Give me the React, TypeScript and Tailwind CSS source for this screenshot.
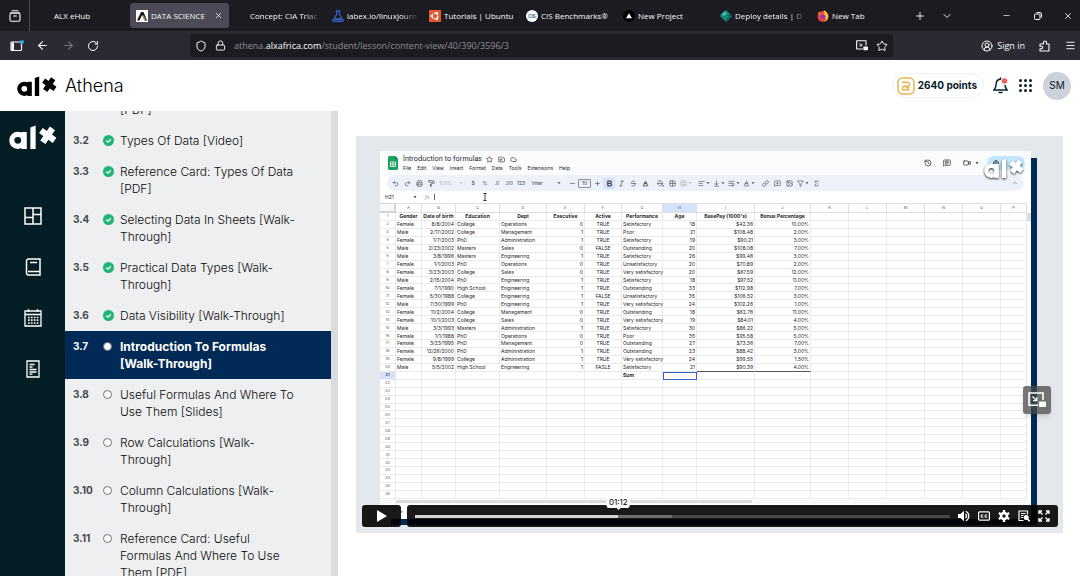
import React from 'react'
import {
  AlignLeft, ArrowDownToLine, ArrowLeft, ArrowRight, Baseline, Bold, ChevronDown, ChevronUp, CircleUserRound, Cloud,
  Filter, FolderInput, Globe, Grid2x2, History, Image as ImageIcon, Italic, Link as LinkIcon, Lock,
  Menu, MessageSquarePlus, MessageSquareText, Minus, PaintBucket, PaintRoller, Plus, Printer, Redo2, RotateCw,
  Shield, Sigma, Star, Strikethrough, TableCellsMerge, Undo2, Video, WrapText, X,
} from 'lucide-react'

const tabs = [
  { title: 'ALX eHub', icon: 'none' },
  { title: 'DATA SCIENCE', icon: 'alx', active: true },
  { title: 'Concept: CIA Triac', icon: 'none', fade: true },
  { title: 'labex.io/linuxjourn', icon: 'flask', fade: true },
  { title: 'Tutorials | Ubuntu', icon: 'ubuntu' },
  { title: 'CIS Benchmarks®', icon: 'cis' },
  { title: 'New Project', icon: 'vercel' },
  { title: 'Deploy details | D', icon: 'deploy', fade: true },
  { title: 'New Tab', icon: 'firefox' },
]

const lessons = [
  { no: '', title: '[PDF]', state: 'hidden' },
  { no: '3.2', title: 'Types Of Data [Video]', state: 'done' },
  { no: '3.3', title: 'Reference Card: Types Of Data [PDF]', state: 'done' },
  { no: '3.4', title: 'Selecting Data In Sheets [Walk-Through]', state: 'done' },
  { no: '3.5', title: 'Practical Data Types [Walk-Through]', state: 'done' },
  { no: '3.6', title: 'Data Visibility [Walk-Through]', state: 'done' },
  { no: '3.7', title: 'Introduction To Formulas [Walk-Through]', state: 'active' },
  { no: '3.8', title: 'Useful Formulas And Where To Use Them [Slides]', state: 'todo' },
  { no: '3.9', title: 'Row Calculations [Walk-Through]', state: 'todo' },
  { no: '3.10', title: 'Column Calculations [Walk-Through]', state: 'todo' },
  { no: '3.11', title: 'Reference Card: Useful Formulas And Where To Use Them [PDF]', state: 'todo' },
]

const columns = [
  { name: 'A', width: 26, head: 'Gender', align: 'text-left' },
  { name: 'B', width: 34, head: 'Date of birth', align: 'text-right' },
  { name: 'C', width: 44, head: 'Education', align: 'text-left' },
  { name: 'D', width: 47, head: 'Dept', align: 'text-left' },
  { name: 'E', width: 38, head: 'Executive', align: 'text-right' },
  { name: 'F', width: 37, head: 'Active', align: 'text-center' },
  { name: 'G', width: 41, head: 'Performance', align: 'text-left' },
  { name: 'H', width: 34, head: 'Age', align: 'text-right' },
  { name: 'I', width: 58, head: "BasePay (1000's)", align: 'text-right' },
  { name: 'J', width: 56, head: 'Bonus Percentage', align: 'text-right' },
  { name: 'K', width: 38, head: '', align: 'text-left' },
  { name: 'L', width: 38, head: '', align: 'text-left' },
  { name: 'M', width: 38, head: '', align: 'text-left' },
  { name: 'N', width: 38, head: '', align: 'text-left' },
  { name: 'O', width: 38, head: '', align: 'text-left' },
  { name: 'P', width: 26, head: '', align: 'text-left' },
]

const staff = [
  ['Female', '8/8/2004', 'College', 'Operations', '0', 'TRUE', 'Satisfactory', '18', '$42.36', '10.00%'],
  ['Male', '2/17/2002', 'College', 'Management', '1', 'TRUE', 'Poor', '21', '$108.48', '2.00%'],
  ['Female', '1/7/2003', 'PhD', 'Administration', '1', 'TRUE', 'Satisfactory', '19', '$90.21', '3.00%'],
  ['Male', '2/23/2002', 'Masters', 'Sales', '0', 'FALSE', 'Outstanding', '20', '$108.08', '7.00%'],
  ['Male', '3/8/1996', 'Masters', 'Engineering', '1', 'TRUE', 'Satisfactory', '26', '$99.46', '3.00%'],
  ['Female', '1/1/2003', 'PhD', 'Operations', '0', 'TRUE', 'Unsatisfactory', '20', '$70.89', '2.00%'],
  ['Female', '3/23/2003', 'College', 'Sales', '0', 'TRUE', 'Very satisfactory', '20', '$67.59', '12.00%'],
  ['Male', '2/15/2004', 'PhD', 'Engineering', '1', 'TRUE', 'Satisfactory', '18', '$97.52', '11.00%'],
  ['Female', '7/1/1990', 'High School', 'Engineering', '1', 'TRUE', 'Outstanding', '33', '$112.98', '7.00%'],
  ['Female', '5/30/1988', 'College', 'Engineering', '1', 'FALSE', 'Unsatisfactory', '35', '$106.52', '3.00%'],
  ['Male', '7/30/1999', 'PhD', 'Engineering', '1', 'TRUE', 'Very satisfactory', '24', '$102.26', '1.00%'],
  ['Female', '11/2/2004', 'College', 'Management', '0', 'TRUE', 'Outstanding', '18', '$62.76', '11.00%'],
  ['Female', '10/1/2003', 'College', 'Sales', '0', 'TRUE', 'Very satisfactory', '19', '$84.01', '4.00%'],
  ['Male', '3/3/1993', 'Masters', 'Administration', '1', 'TRUE', 'Satisfactory', '30', '$86.22', '5.00%'],
  ['Female', '1/1/1988', 'PhD', 'Operations', '0', 'TRUE', 'Poor', '35', '$95.58', '5.00%'],
  ['Female', '3/23/1995', 'PhD', 'Management', '0', 'TRUE', 'Outstanding', '27', '$73.36', '7.00%'],
  ['Female', '12/26/2000', 'PhD', 'Administration', '1', 'TRUE', 'Outstanding', '23', '$88.42', '3.00%'],
  ['Female', '9/8/1999', 'College', 'Administration', '1', 'TRUE', 'Very satisfactory', '24', '$99.55', '1.50%'],
  ['Male', '5/5/2002', 'High School', 'Engineering', '1', 'FASLE', 'Satisfactory', '21', '$90.39', '4.00%'],
  ['', '', '', '', '', '', 'Sum', '', '', ''],
]

function AlxLogo({ className }: { className: string }) {
  return (
    <svg viewBox="0 0 40 20" className={className} fill="none" stroke="currentColor" aria-label="alx" role="img">
      <circle cx="7.3" cy="12.8" r="5" strokeWidth="4.2" />
      <rect x="10.4" y="5.8" width="4.4" height="14.2" fill="currentColor" stroke="none" />
      <path d="M17.800 2 22.200.4V20h-4.400z" fill="currentColor" stroke="none" />
      <line x1="26.600" y1="4.600" x2="38" y2="12.800" strokeWidth="5.200" />
      <line x1="36.200" y1="2.800" x2="28.200" y2="14.400" strokeWidth="5.200" />
    </svg>
  )
}

function Favicon({ kind }: { kind: string }) {
  if (kind === 'alx') {
    return (
      <svg viewBox="0 0 12 12" className="size-3 shrink-0">
        <rect width="12" height="12" fill="#fff" />
        <path d="M1 10.500 5 2h2.500L11 10.500H8.500L6 5l-2.500 5.500z" fill="#16161d" />
        <path d="M7 5.500 9 10" stroke="#e8955a" strokeWidth="1.200" />
      </svg>
    )
  }
  if (kind === 'flask') {
    return (
      <svg viewBox="0 0 12 12" className="size-3 shrink-0" fill="none" stroke="#2f66d0" strokeWidth="1.2">
        <path d="M3.800.8h4.400M4.600.8v3.700L.9 10.200c-.3.600 0 1.100.6 1.100h9c.6 0 .9-.5.6-1.100L7.400 4.500V.8" />
        <path d="M2.800 8.200h6.400L10 10.200H2z" fill="#2f66d0" stroke="none" />
      </svg>
    )
  }
  if (kind === 'ubuntu') {
    return (
      <svg viewBox="0 0 12 12" className="size-3 shrink-0">
        <rect width="12" height="12" fill="#e2582c" />
        <circle cx="6" cy="6" r="2.900" fill="none" stroke="#fff" strokeWidth="1.200" strokeDasharray="5 1.070" />
        <circle cx="2.400" cy="6" r="1" fill="#fff" />
        <circle cx="7.900" cy="2.800" r="1" fill="#fff" />
        <circle cx="7.900" cy="9.200" r="1" fill="#fff" />
      </svg>
    )
  }
  if (kind === 'cis') {
    return (
      <svg viewBox="0 0 12 12" className="size-3 shrink-0">
        <circle cx="6" cy="6" r="6" fill="#fff" />
        <text x="6" y="7.600" textAnchor="middle" fontSize="4.500" fontWeight="700" fill="#2c5c8a" fontFamily="Inter">CIS</text>
      </svg>
    )
  }
  if (kind === 'vercel') {
    return (
      <svg viewBox="0 0 12 12" className="size-3 shrink-0">
        <circle cx="6" cy="6" r="6" fill="#000" />
        <path d="M6 3.200 9 8.200H3z" fill="#fff" />
      </svg>
    )
  }
  if (kind === 'deploy') {
    return (
      <svg viewBox="0 0 12 12" className="size-3 shrink-0">
        <path d="M6 .5 11.500 6 6 11.500.5 6z" fill="#12897f" stroke="#12897f" strokeLinejoin="round" />
        <path d="M5 11 11 5M7.500 5.500h4" stroke="#0c3f44" strokeWidth=".8" />
        <path d="M1 4.500 4.500 1 7 4 4 6z" fill="#2fc0ad" />
      </svg>
    )
  }
  if (kind === 'firefox') {
    return (
      <svg viewBox="0 0 12 12" className="size-3 shrink-0">
        <circle cx="6" cy="6.400" r="5.400" fill="#f0413f" />
        <path d="M7 .2c2.800 1.300 4.600 3.800 4.400 6.600-.3 2.600-2 4.300-4.200 4.800C9.500 9.500 9 5.500 6.500 4z" fill="#ffbd2e" />
        <path d="M.8 3.500 2.200 1.500l1 1.700 2 .3L3.500 5z" fill="#ff7a2b" />
        <circle cx="5.900" cy="6.600" r="2.300" fill="#7a3fd0" />
      </svg>
    )
  }
  return <span className="size-3 shrink-0" />
}

function PipIcon({ className }: { className: string }) {
  return (
    <svg viewBox="0 0 18 16" className={className} fill="none" stroke="currentColor" strokeWidth="1.6">
      <path d="M10 13.200H1V1h14v7" />
      <path d="m4.500 4.500 4 4M8.700 5.200v3.500H5.200" strokeWidth="1.300" />
      <rect x="11" y="9.500" width="7" height="5.500" rx="1" fill="currentColor" stroke="none" />
    </svg>
  )
}

function BrowserBar() {
  return (
    <div className="font-['Open_Sans',sans-serif] text-[9px] text-[#fbfbfe]">
      <div className="flex h-[31px] items-center bg-[#1c1b22]">
        <button aria-label="Firefox View" className="mr-[3px] flex h-full w-[30px] items-center justify-center border-r border-[#4a4953]">
          <svg viewBox="0 0 12 12" className="size-3" fill="none" stroke="currentColor" strokeWidth="1.1">
            <path d="M2.500.8h7M1 3h10" />
            <rect x="1" y="3" width="10" height="8.200" rx="1.500" />
            <path d="M4.200 6h3.600" />
          </svg>
        </button>
        <div className="flex min-w-0 flex-1 text-[8px]">
          {tabs.map((tab) => (
            <div
              key={tab.title}
              className={`flex h-[25px] min-w-0 flex-1 items-center gap-[3px] rounded-[3px] pl-[6px] ${tab.active ? 'bg-[#4b4a56] pr-[6px]' : 'pr-1'}`}
            >
              <Favicon kind={tab.icon} />
              <span className={`flex-1 whitespace-nowrap ${tab.fade ? 'mask-r-from-75% mask-r-to-100%' : ''}`}>{tab.title}</span>
              {tab.active && <button aria-label="Close tab"><X className="size-[9px]" /></button>}
            </div>
          ))}
        </div>
        <div className="flex w-[172px] items-center">
          <button aria-label="New tab" className="flex w-6 justify-center"><Plus className="size-3" strokeWidth={1.8} /></button>
          <button aria-label="List all tabs" className="ml-1 mr-[34px] flex w-6 justify-center"><ChevronDown className="size-3" strokeWidth={1.8} /></button>
          <button aria-label="Minimize" className="flex w-[26px] justify-center"><Minus className="size-[9px]" strokeWidth={1.8} /></button>
          <button aria-label="Restore" className="flex w-[38px] justify-center">
            <svg viewBox="0 0 8 8" className="size-2" fill="none" stroke="currentColor">
              <rect x=".5" y="2" width="5.500" height="5.500" rx="1" />
              <path d="M2.500.5H6A1.500 1.500 0 0 1 7.500 2v3.500" />
            </svg>
          </button>
          <button aria-label="Close window" className="flex w-6 justify-center"><X className="size-[10px]" /></button>
        </div>
      </div>
      <div className="flex h-[29px] items-center bg-[#2b2a33]">
        <div className="flex w-[190px] items-center pl-[5px]">
          <button aria-label="Sidebar" className="flex w-6 justify-center">
            <svg viewBox="0 0 14 12" className="h-3 w-[14px]" fill="none" stroke="currentColor" strokeWidth="1.2">
              <rect x="1" y="2" width="10.500" height="8.500" rx="1" />
              <path d="M1.500 2.500h2.500v7.500H1.500z" fill="currentColor" stroke="none" />
              <circle cx="12" cy="2" r="2" fill="#2aa7de" stroke="none" />
            </svg>
          </button>
          <button aria-label="Back" className="flex w-[26px] justify-center"><ArrowLeft className="size-[13px]" /></button>
          <button aria-label="Forward" className="flex w-[26px] justify-center text-[#77767f]"><ArrowRight className="size-[13px]" /></button>
          <button aria-label="Reload" className="flex w-6 justify-center"><RotateCw className="size-3" /></button>
        </div>
        <div className="flex h-[23px] min-w-0 flex-1 items-center rounded-[3px] bg-[#1c1b22] px-[5px]">
          <Shield className="size-3" />
          <Lock className="ml-2 size-[11px]" />
          <div
            role="textbox"
            aria-label="Address"
            contentEditable
            suppressContentEditableWarning
            className="ml-2 min-w-0 flex-1 truncate text-[#8f8e97]"
          >
            athena.<span className="text-[#fbfbfe]">alxafrica.com</span>/student/lesson/content-view/40/390/3596/3
          </div>
          <button aria-label="Picture-in-Picture"><PipIcon className="h-[11px] w-3" /></button>
          <button aria-label="Bookmark" className="ml-2"><Star className="size-3" /></button>
        </div>
        <div className="flex w-[187px] items-center justify-end pr-1">
          <button className="mr-[14px] flex items-center gap-1">
            <CircleUserRound className="size-3" />
            Sign in
          </button>
          <button aria-label="Extensions" className="mr-[14px]">
            <svg viewBox="0 0 12 12" className="size-3" fill="none" stroke="currentColor" strokeWidth="1.1" strokeLinejoin="round">
              <path d="M1 4h3.500V2.500a1.500 1.500 0 0 1 3 0V4H10v7H1V8.800h1.500a1.200 1.200 0 0 0 0-2.500H1z" />
            </svg>
          </button>
          <button aria-label="Menu"><Menu className="size-[11px]" /></button>
        </div>
      </div>
    </div>
  )
}

function Header() {
  return (
    <header className="flex h-[51px] items-center bg-white pl-[17px] pr-[9px] text-[#06202a]">
      <AlxLogo className="h-5 w-10 text-black" />
      <span className="ml-2 text-lg font-light text-black">Athena</span>
      <div className="ml-auto flex items-center">
        <div className="flex h-[25px] items-center gap-[3px] rounded-full border border-[#f1f1f1] px-1">
          <svg viewBox="0 0 18 18" className="size-[18px]" fill="none" stroke="#e6b84f" strokeWidth="1.5">
            <rect x="1" y="1" width="16" height="16" rx="4.500" />
            <path d="M5 5.200h5.500a2 2 0 0 1 2 2v0a2 2 0 0 1-2 2H7.500a2 2 0 0 0-2 2v1.600H12.500M8.500 10.800h4" />
          </svg>
          <span className="pr-[2px] text-[10px] font-bold">2640 points</span>
        </div>
        <button aria-label="Notifications" className="ml-[9px]">
          <svg viewBox="0 0 15 17" className="h-[17px] w-[15px]" fill="none" stroke="currentColor" strokeWidth="1.5">
            <path d="M8 2.200C5 2 3.300 4 3.200 6.500c0 3.500-.8 4.700-2.200 6.500h13c-1.300-1.500-1.900-2.800-2-5" />
            <path d="M5.500 15.500h4M7.500 2V.5" />
            <circle cx="11.500" cy="4" r="2.800" fill="#f5605f" stroke="none" />
          </svg>
        </button>
        <button aria-label="Apps" className="ml-[11px] grid grid-cols-3 gap-[2px]">
          {[...Array(9)].map((_, i) => (
            <span key={i} className="size-[3px] rounded-full bg-[#06202a]" />
          ))}
        </button>
        <button className="ml-[11px] size-7 rounded-full bg-[#cdd1db] text-[10px]">SM</button>
      </div>
    </header>
  )
}

function Rail() {
  return (
    <nav className="flex w-[65px] shrink-0 flex-col items-center bg-[#051e26] pt-[14px] text-white">
      <AlxLogo className="h-6 w-12" />
      <div className="mt-[58px] flex flex-col gap-[33px]">
        <a href="#dashboard" aria-label="Dashboard">
          <svg viewBox="0 0 18 18" className="size-[18px]" fill="none" stroke="currentColor" strokeWidth="1.5">
            <path d="M1 1h16v16H1zM9 1v16M1 10.500h8M9 7.500h8" />
          </svg>
        </a>
        <a href="#library" aria-label="Library">
          <svg viewBox="0 0 18 18" className="size-[18px]" fill="none" stroke="currentColor" strokeWidth="1.5">
            <path d="M16 13.500V1H4a2 2 0 0 0-1.500 2v12A2 2 0 0 0 4 17h12v-3.500H4M6 4.500h7" />
          </svg>
        </a>
        <a href="#calendar" aria-label="Calendar">
          <svg viewBox="0 0 18 18" className="size-[18px]" fill="none" stroke="currentColor" strokeWidth="1.3">
            <path d="M1 2h16v15H1zM1 5.500h16M4.500 0v3M13.500 0v3" />
            <path d="M4 8.500h11M4 11.200h11M4 14h11" strokeWidth="1.700" strokeDasharray="1.700 1.200" />
          </svg>
        </a>
        <a href="#notes" aria-label="Notes">
          <svg viewBox="0 0 18 18" className="size-[18px]" fill="none" stroke="currentColor" strokeWidth="1.3">
            <path d="M3 1h12v16H3zM5.500 4.500h5M5.500 7h3M5.500 9.500h7M5.500 12h7M5.500 14.200h3" />
          </svg>
        </a>
      </div>
    </nav>
  )
}

function LessonMark({ state }: { state: string }) {
  if (state === 'done') {
    return (
      <svg viewBox="0 0 11 11" className="mt-[3px] size-[11px]">
        <circle cx="5.500" cy="5.500" r="5.500" fill="#1fb574" />
        <path d="m3.200 5.600 1.700 1.600 3-3" fill="none" stroke="#fff" strokeWidth="1.300" />
      </svg>
    )
  }
  if (state === 'hidden') return <span />
  return <span className="mt-1 size-[9px] rounded-full border border-[#6b6f73] bg-white" />
}

function Lessons() {
  return (
    <aside className="flex w-[273px] shrink-0 overflow-hidden bg-[#eeeff1]">
      <ul className="-mt-[17px] min-w-0 flex-1">
        {lessons.map((lesson) => (
          <li key={lesson.title}>
            <a
              href="#lesson"
              className={`grid grid-cols-[30px_17px_1fr] py-[7px] pl-2 pr-8 text-xs leading-[17px] ${lesson.state === 'active' ? 'bg-[#022a56] font-bold text-white' : 'font-light text-[#0a0a0a]'}`}
            >
              <span className={`text-[10px] font-bold ${lesson.state === 'active' ? '' : 'text-[#45484b]'}`}>{lesson.no}</span>
              <LessonMark state={lesson.state} />
              <span>{lesson.title}</span>
            </a>
          </li>
        ))}
      </ul>
      <div className="w-[7px] bg-[#dadbdc]" />
    </aside>
  )
}

function Caret() {
  return (
    <svg viewBox="0 0 4 4" className="size-1 shrink-0" fill="currentColor">
      <path d="M.5 1.200h3L2 2.900z" />
    </svg>
  )
}

function Tool({ label, children }: { label: string; children: React.ReactNode }) {
  return (
    <button aria-label={label} className="flex h-full w-3 shrink-0 items-center justify-center [&_svg]:size-[7px]">
      {children}
    </button>
  )
}

function MenuTool({ label, children }: { label: string; children: React.ReactNode }) {
  return (
    <button aria-label={label} className="flex h-full w-[15px] shrink-0 items-center justify-center gap-px">
      {children}
      <Caret />
    </button>
  )
}

function SheetToolbar() {
  return (
    <div className="mx-[7px] flex h-4 items-center rounded-full bg-[#edf2fa] px-[2px] text-[5px] text-[#444746]">
      <Tool label="Undo"><Undo2 /></Tool>
      <Tool label="Redo"><Redo2 /></Tool>
      <Tool label="Print"><Printer /></Tool>
      <Tool label="Paint format"><PaintRoller /></Tool>
      <button className="mr-[2px] flex w-7 items-center justify-between px-[2px] text-[#b4b7ba]">100%<Caret /></button>
      <Tool label="Currency">$</Tool>
      <Tool label="Percent">%</Tool>
      <Tool label="Decrease decimals">.0</Tool>
      <Tool label="Increase decimals">.00</Tool>
      <Tool label="More formats">123</Tool>
      <button className="flex w-[39px] items-center justify-between px-[5px]">Inter<Caret /></button>
      <Tool label="Smaller"><Minus /></Tool>
      <span className="w-[13px] rounded-[1px] border border-[#8d9093] text-center leading-[7px]">10</span>
      <Tool label="Larger"><Plus /></Tool>
      <button aria-label="Bold" className="flex h-[11px] w-3 items-center justify-center rounded-[2px] bg-[#d3e3fd]"><Bold className="size-[7px]" strokeWidth={4} /></button>
      <Tool label="Italic"><Italic /></Tool>
      <Tool label="Strikethrough"><Strikethrough /></Tool>
      <Tool label="Text colour"><Baseline strokeWidth={3} /></Tool>
      <span className="w-[3px]" />
      <Tool label="Fill colour"><PaintBucket /></Tool>
      <Tool label="Borders"><Grid2x2 /></Tool>
      <span className="mr-[3px] flex text-[#b4b7ba]"><MenuTool label="Merge"><TableCellsMerge className="size-[7px]" /></MenuTool></span>
      <MenuTool label="Align"><AlignLeft className="size-[7px]" /></MenuTool>
      <MenuTool label="Vertical align"><ArrowDownToLine className="size-[7px]" /></MenuTool>
      <MenuTool label="Wrapping"><WrapText className="size-[7px]" /></MenuTool>
      <MenuTool label="Rotation"><Baseline className="size-[7px]" /></MenuTool>
      <span className="w-[3px]" />
      <Tool label="Link"><LinkIcon /></Tool>
      <Tool label="Comment"><MessageSquarePlus /></Tool>
      <Tool label="Chart"><ImageIcon /></Tool>
      <MenuTool label="Filter"><Filter className="size-[7px]" /></MenuTool>
      <Tool label="Functions"><Sigma /></Tool>
      <button aria-label="Collapse" className="ml-auto mr-1"><ChevronUp className="size-[6px]" /></button>
    </div>
  )
}

function cellStyle(row: number, col: number) {
  if (row === 21 && col === 7) return 'border-[#e9eaea] outline outline-1 -outline-offset-1 outline-[#2f63c4]'
  if (row === 20 && (col === 8 || col === 9)) return 'border-r-[#e9eaea] border-b-[#555]'
  return 'border-[#e9eaea]'
}

function Sheet() {
  return (
    <div className="relative col-start-1 row-start-1 mb-[6px] mr-[6px] overflow-hidden bg-white text-[5px] leading-[6px] text-[#1f1f1f]">
      <div className="flex h-6 items-start bg-[#f9fbfd] pl-2 pt-1">
        <svg viewBox="0 0 10 14" className="mt-px h-[14px] w-[10px]">
          <path d="M1.500 0H7l3 3v9.500A1.500 1.500 0 0 1 8.500 14h-7A1.500 1.500 0 0 1 0 12.500v-11A1.500 1.500 0 0 1 1.500 0z" fill="#1ba260" />
          <path d="M7 0l3 3H7z" fill="#0c7a43" />
          <path d="M2.500 6h5v4.500h-5zM2.500 8.200h5M5 6v4.500" fill="none" stroke="#fff" strokeWidth=".8" />
        </svg>
        <div className="ml-[5px]">
          <div className="flex items-center text-[7px] leading-[8px]">
            Introduction to formulas
            <Star className="ml-1 size-[7px]" />
            <FolderInput className="ml-[5px] size-[7px]" />
            <Cloud className="ml-[5px] size-[7px]" />
          </div>
          <div className="mt-[2px] flex gap-[6px]">
            {['File', 'Edit', 'View', 'Insert', 'Format', 'Data', 'Tools', 'Extensions', 'Help'].map((name) => (
              <button key={name}>{name}</button>
            ))}
          </div>
        </div>
        <div className="ml-auto mr-[6px] flex items-center pt-px">
          <History className="size-2" />
          <MessageSquareText className="ml-[11px] size-2" />
          <Video className="ml-3 size-2" />
          <span className="ml-1"><Caret /></span>
          <span className="ml-2 flex h-[14px] w-[38px] items-center rounded-full bg-[#c2e7ff] pl-[6px]"><Globe className="size-[6px]" /></span>
        </div>
        <AlxLogo className="absolute right-[7px] top-[7px] h-5 w-10 overflow-visible text-white drop-shadow-[0_1px_1px_rgba(0,0,0,0.8)]" />
      </div>
      <SheetToolbar />
      <div className="flex h-3 items-center pl-[5px]">
        <span className="w-7">H21</span>
        <Caret />
        <span className="ml-2 italic text-[#8d9093]">fx</span>
        <span className="ml-1 h-[6px] w-px bg-[#5f6368]" />
        <svg viewBox="0 0 4 8" className="ml-12 h-2 w-1" fill="none" stroke="#111" strokeWidth=".8">
          <path d="M.3.5h3.400M.3 7.500h3.400M2 .5v7" />
        </svg>
      </div>
      <table className="h-[296px] w-full table-fixed border-separate border-spacing-0">
        <colgroup>
          <col className="w-4" />
          {columns.map((col) => (
            <col key={col.name} style={{ width: col.width }} />
          ))}
          <col className="w-1" />
        </colgroup>
        <thead>
          <tr className="h-[10px] text-[4px] text-[#575a5e]">
            <th className="border-b-2 border-r-2 border-t border-[#d0d3d6] bg-[#f8f9fa]" />
            {columns.map((col) => (
              <th
                key={col.name}
                className={`border-b border-r border-t border-[#dcdee0] p-0 font-normal ${col.name === 'H' ? 'bg-[#d3e3fd]' : ''}`}
              >
                {col.name}
              </th>
            ))}
            <th className="p-0" />
          </tr>
        </thead>
        <tbody>
          <tr>
            <th className="border-b border-r border-[#e9eaea] p-0 text-[4px] font-normal text-[#575a5e]">1</th>
            {columns.map((col) => (
              <th key={col.name} className="whitespace-nowrap border-b border-r border-[#e9eaea] p-0 text-center font-bold">
                {col.head}
              </th>
            ))}
            <td className="bg-[#dadce0] p-0" />
          </tr>
          {[...Array(35)].map((_, i) => (
            <tr key={i}>
              <th className={`border-b border-r border-[#e9eaea] p-0 text-[4px] text-[#575a5e] ${i === 19 ? 'bg-[#d3e3fd] font-bold' : 'font-normal'}`}>{i + 2}</th>
              {columns.map((col, c) => (
                <td
                  key={col.name}
                  className={`whitespace-nowrap border-b border-r px-px py-0 ${col.align} ${i === 19 ? 'font-bold' : ''} ${cellStyle(i + 2, c)}`}
                >
                  {staff[i]?.[c]}
                </td>
              ))}
              <td className="p-0" />
            </tr>
          ))}
        </tbody>
      </table>
      <div className="mt-px h-1 bg-[#f8f9fa] pl-4">
        <div className="h-[3px] w-[56%] bg-[#dadce0]" />
      </div>
      <div className="h-[15px] pl-5 pt-1">+</div>
    </div>
  )
}

function PlayerControls() {
  return (
    <div className="absolute bottom-[6px] left-[6px] right-[5px] flex h-[22px] gap-[6px] text-white">
      <button aria-label="Play" className="flex w-[39px] items-center justify-center rounded-[3px] bg-black/90">
        <svg viewBox="0 0 10 12" className="h-3 w-[10px]" fill="currentColor"><path d="M0 0l10 6-10 6z" /></svg>
      </button>
      <div className="flex flex-1 items-center rounded-[3px] bg-black/90 px-2">
        <div className="relative flex flex-1 items-center">
          <input
            type="range"
            aria-label="Seek"
            defaultValue={38}
            className="h-[3px] w-full appearance-none bg-[linear-gradient(to_right,#d3d5d5_38%,#6c6e6e_38%_48%,#434746_48%)] [&::-webkit-slider-thumb]:size-0 [&::-webkit-slider-thumb]:appearance-none"
          />
          <div className="absolute bottom-[10px] left-[38%] -translate-x-1/2 rounded-[2px] bg-white px-[2px] text-[8px] leading-[12px] text-black">
            01:12
            <span className="absolute left-1/2 top-full -translate-x-1/2 border-x-2 border-t-2 border-x-transparent border-t-white" />
          </div>
        </div>
        <button aria-label="Volume" className="ml-2 flex w-3 justify-center">
          <svg viewBox="0 0 12 12" className="size-3" fill="currentColor" stroke="currentColor">
            <path d="M0 4h2.500L6 .8v10.400L2.500 8H0z" stroke="none" />
            <path d="M7.500 3.800c1.200 1.200 1.200 3.200 0 4.400M7.800 1.200c4 1.800 4 7.800 0 9.600" fill="none" strokeWidth="1.200" />
          </svg>
        </button>
        <button aria-label="Captions" className="ml-2 flex w-3 justify-center">
          <svg viewBox="0 0 12 12" className="size-3" fill="none" stroke="currentColor">
            <rect x=".6" y="1.800" width="10.800" height="8.400" rx="1" strokeWidth="1.200" />
            <path d="M5.300 5H3.200v2.200h2.100M9.200 5H7.100v2.200h2.100" />
          </svg>
        </button>
        <button aria-label="Settings" className="ml-2 flex w-3 justify-center">
          <svg viewBox="0 0 12 12" className="size-3" fill="none" stroke="currentColor">
            <circle cx="6" cy="6" r="3" strokeWidth="2.600" />
            <path d="M6 0v2.500M6 9.500V12M.8 3l2.200 1.200M9 7.800 11.200 9M.8 9 3 7.800M9 4.200 11.200 3" strokeWidth="2.400" />
          </svg>
        </button>
        <button aria-label="Transcript" className="ml-2 flex w-3 justify-center">
          <svg viewBox="0 0 12 12" className="size-3" fill="none" stroke="currentColor" strokeWidth="1.2">
            <path d="M5.500 10.500H1V1h8.500v3.500M3 3.500h4.500M3 5.500h2.500M3 7.500h2" />
            <circle cx="8.200" cy="7.600" r="1.900" fill="currentColor" />
            <path d="m9.500 9 2.200 2.400" strokeWidth="1.500" />
          </svg>
        </button>
        <button aria-label="Fullscreen" className="ml-2 flex w-3 justify-center">
          <svg viewBox="0 0 12 12" className="size-3" fill="none" stroke="currentColor" strokeWidth="1.3">
            <path d="M1 4V1h3M8 1h3v3M11 8v3H8M4 11H1V8M1.500 1.500l3 3M10.500 1.500l-3 3M1.500 10.500l3-3M10.500 10.500l-3-3" />
          </svg>
        </button>
      </div>
    </div>
  )
}

export default function App() {
  return (
    <div className="flex h-screen flex-col overflow-hidden bg-white font-[Inter,sans-serif]">
      <BrowserBar />
      <Header />
      <div className="flex min-h-0 flex-1">
        <Rail />
        <Lessons />
        <main className="min-w-0 flex-1 pl-[18px] pr-[17px] pt-[25px]">
          {/* Video player */}
          <div className="relative grid bg-[#e4e7ec] pb-2 pl-6 pr-[26px] pt-[15px]">
            <div className="col-start-1 row-start-1 ml-[11px] mt-[7px] bg-[#022a56]" />
            <Sheet />
            <PlayerControls />
            <button
              aria-label="Picture-in-Picture"
              className="absolute right-3 top-[250px] flex size-7 items-center justify-center rounded-[3px] bg-[#4a4a4a]/75 text-white shadow-md"
            >
              <PipIcon className="h-4 w-[18px]" />
            </button>
          </div>
        </main>
      </div>
    </div>
  )
}
